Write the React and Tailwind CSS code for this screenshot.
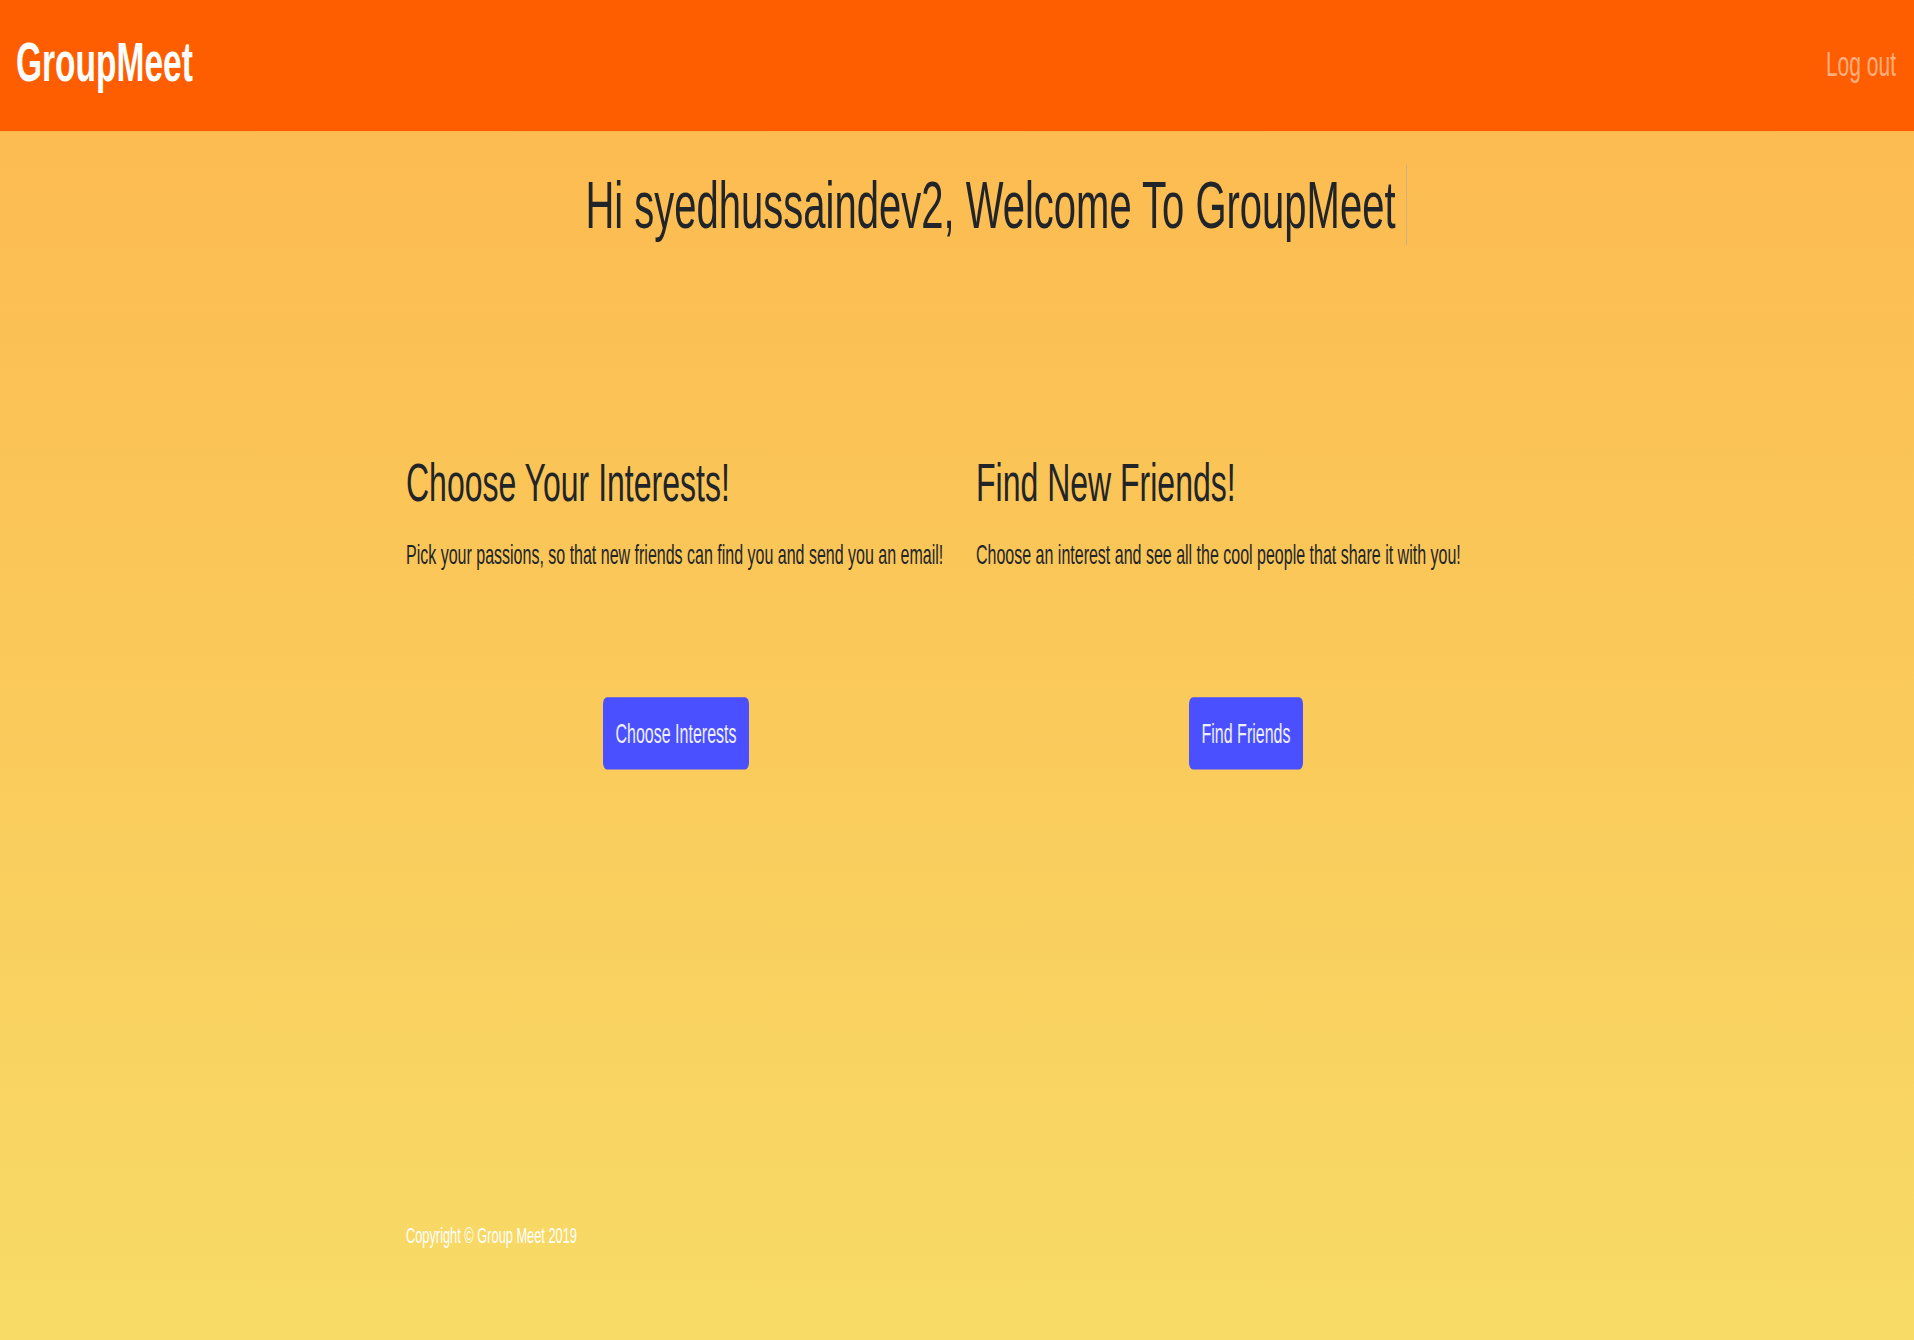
import React from "react";

// The reference is a stretched capture: the page is laid out at its natural
// size and stretched vertically once so it fills the 1340px frame.
export default function App() {
  return (
    <div className="h-[1340px] w-full overflow-hidden bg-gradient-to-b from-[#fdb84f] via-[#fac95a] to-[#f8db67]">
      <div className="h-[798px] w-full origin-top scale-y-[1.68] bg-gradient-to-b from-[#fdb84f] via-[#fac95a] to-[#f8db67] font-['Liberation_Sans',Arial,sans-serif] text-[#212529]">
        {/* Navbar */}
        <nav className="h-[78px] bg-[#ff5e00] flex items-center justify-between pl-4 pr-[18px] pb-1">
          <a className="text-[33.5px] leading-none font-bold text-white">GroupMeet</a>
          <a className="text-[21px] leading-none text-white/50">Log out</a>
        </nav>

        {/* Welcome heading */}
        <div className="mt-[20px] flex justify-center pl-[78px]">
          <h1 className="inline-block whitespace-nowrap text-[40px] leading-[48px] font-normal pr-[10px] border-r border-[#d2b07a]">
            Hi syedhussaindev2, Welcome To GroupMeet
          </h1>
        </div>

        <div className="w-[1140px] mx-auto pl-[19px] pr-[11px]">
          {/* Two feature columns */}
          <div className="mt-[122px] grid grid-cols-2 gap-[30px]">
            <div>
              <h2 className="text-[32px] leading-[38.4px] font-normal mb-[13px]">Choose Your Interests!</h2>
              <p className="text-base leading-6">
                Pick your passions, so that new friends can find you and send you an email!
              </p>
              <div className="mt-[72px] flex justify-center">
                <button className="h-[43px] px-[13px] rounded bg-[#4a4fff] text-[#eef0ff] text-base leading-6">
                  Choose Interests
                </button>
              </div>
            </div>
            <div>
              <h2 className="text-[32px] leading-[38.4px] font-normal mb-[13px]">Find New Friends!</h2>
              <p className="text-base leading-6">
                Choose an interest and see all the cool people that share it with you!
              </p>
              <div className="mt-[72px] flex justify-center">
                <button className="h-[43px] px-[13px] rounded bg-[#4a4fff] text-[#eef0ff] text-base leading-6">
                  Find Friends
                </button>
              </div>
            </div>
          </div>

          {/* Footer */}
          <footer className="mt-[265px]">
            <small className="text-[12.8px] leading-[19.2px] text-white">Copyright © Group Meet 2019</small>
          </footer>
        </div>
      </div>
    </div>
  );
}
